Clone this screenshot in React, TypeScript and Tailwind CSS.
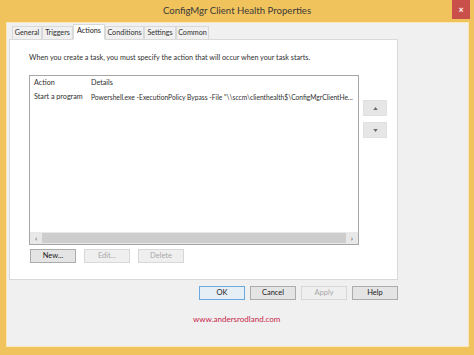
import React from 'react';

const tabs = [
  { name: 'General', w: 'w-[30px]' },
  { name: 'Triggers', w: 'w-[31px]' },
  { name: 'Actions', w: 'w-[32px]' },
  { name: 'Conditions', w: 'w-[39px]' },
  { name: 'Settings', w: 'w-[32px]' },
  { name: 'Common', w: 'w-[33px]' },
];

function Btn({ label, disabled = false, primary = false }: { label: string; disabled?: boolean; primary?: boolean }) {
  return (
    <div
      className={`w-[46px] h-[14px] flex items-center justify-center text-[7.5px] border ${
        primary ? 'border-[#6aaae0] bg-[#e6eef6]' : disabled ? 'border-[#d8d8d8] bg-[#efefef]' : 'border-[#acacac] bg-[#e4e4e4]'
      } ${disabled ? 'text-[#a8a8a8]' : 'text-[#202020]'}`}
    >
      {label}
    </div>
  );
}

export default function App() {
  return (
    <div
      className="w-[474px] h-[355px] bg-[#f1c35c] flex flex-col overflow-hidden"
      style={{ fontFamily: 'Lato, "Open Sans", sans-serif' }}
    >
      {/* Title bar */}
      <div className="h-[22px] relative flex items-center justify-center">
        <span className="text-[9.6px] text-[#3a3a3a]">ConfigMgr Client Health Properties</span>
        <div className="absolute right-[4px] top-0 w-[18px] h-[19px] bg-[#c9504a] flex items-center justify-center text-white text-[9px] font-bold">
          ×
        </div>
      </div>

      {/* Client area */}
      <div className="flex-1 ml-[6px] mr-[5px] mb-[8px] border border-[#fbe7b8] bg-[#f0f0f0] flex flex-col">
        <div className="flex flex-col ml-[2px] w-[389px]">
          {/* Tabs */}
          <div className="flex items-end h-[15px] mt-[1px] pl-[3px]">
            {tabs.map((t) => (
              <div
                key={t.name}
                className={`${t.w} text-center text-[7.2px] border border-[#d9d9d9] ${
                  t.name === 'Actions'
                    ? 'h-[16px] bg-white border-b-white -mb-px relative z-10 text-[#202020] leading-[12px]'
                    : 'h-[13px] bg-[#f0f0f0] border-b-0 text-[#303030] leading-[12px]'
                }`}
              >
                {t.name}
              </div>
            ))}
          </div>
          {/* Panel */}
          <div className="h-[241px] bg-white border border-[#d9d9d9] pl-[19px] pt-[13px]">
            <div className="text-[7.2px] text-[#303030] leading-[10px] whitespace-nowrap">
              When you create a task, you must specify the action that will occur when your task starts.
            </div>
            <div className="flex mt-[12px]">
              <div className="w-[330px] h-[170px] border border-[#a6a6a6] flex flex-col">
                <div className="flex-1 pl-[4px] pt-0 text-[7.2px] text-[#303030] leading-[14px] overflow-hidden">
                  <div className="flex">
                    <span className="w-[57px] shrink-0">Action</span>
                    <span>Details</span>
                  </div>
                  <div className="flex whitespace-nowrap">
                    <span className="w-[57px] shrink-0">Start a program</span>
                    <span className="text-[6.7px]">Powershell.exe -ExecutionPolicy Bypass -File "\\sccm\clienthealth$\ConfigMgrClientHe...</span>
                  </div>
                </div>
                <div className="h-[12px] flex items-center bg-[#e8e8e8]">
                  <span className="w-[12px] text-center text-[8px] text-[#404040] leading-none">‹</span>
                  <div className="flex-1 h-[10px] bg-[#cdcdcd]" />
                  <span className="w-[12px] text-center text-[8px] text-[#404040] leading-none">›</span>
                </div>
              </div>
              <div className="flex flex-col ml-[4px] mt-[25px] gap-[6px]">
                <div className="w-[24px] h-[16px] bg-[#e6e6e6] border border-[#e0e0e0] flex items-center justify-center">
                  <svg width="5" height="3" viewBox="0 0 6 4"><path d="M0 4 L3 0 L6 4 Z" fill="#6a6a6a" /></svg>
                </div>
                <div className="w-[24px] h-[16px] bg-[#e6e6e6] border border-[#e0e0e0] flex items-center justify-center">
                  <svg width="5" height="3" viewBox="0 0 6 4"><path d="M0 0 L3 4 L6 0 Z" fill="#6a6a6a" /></svg>
                </div>
              </div>
            </div>
            <div className="flex mt-[4px] ml-[1px] gap-[8px]">
              <Btn label="New..." />
              <Btn label="Edit..." disabled />
              <Btn label="Delete" disabled />
            </div>
          </div>
          {/* Bottom buttons */}
          <div className="flex justify-end gap-[5px] mt-[6px]">
            <Btn label="OK" primary />
            <Btn label="Cancel" />
            <Btn label="Apply" disabled />
            <Btn label="Help" />
          </div>
          <div className="ml-[184px] mt-[13px] text-[8px] text-[#c8284a]">www.andersrodland.com</div>
        </div>
      </div>
    </div>
  );
}
